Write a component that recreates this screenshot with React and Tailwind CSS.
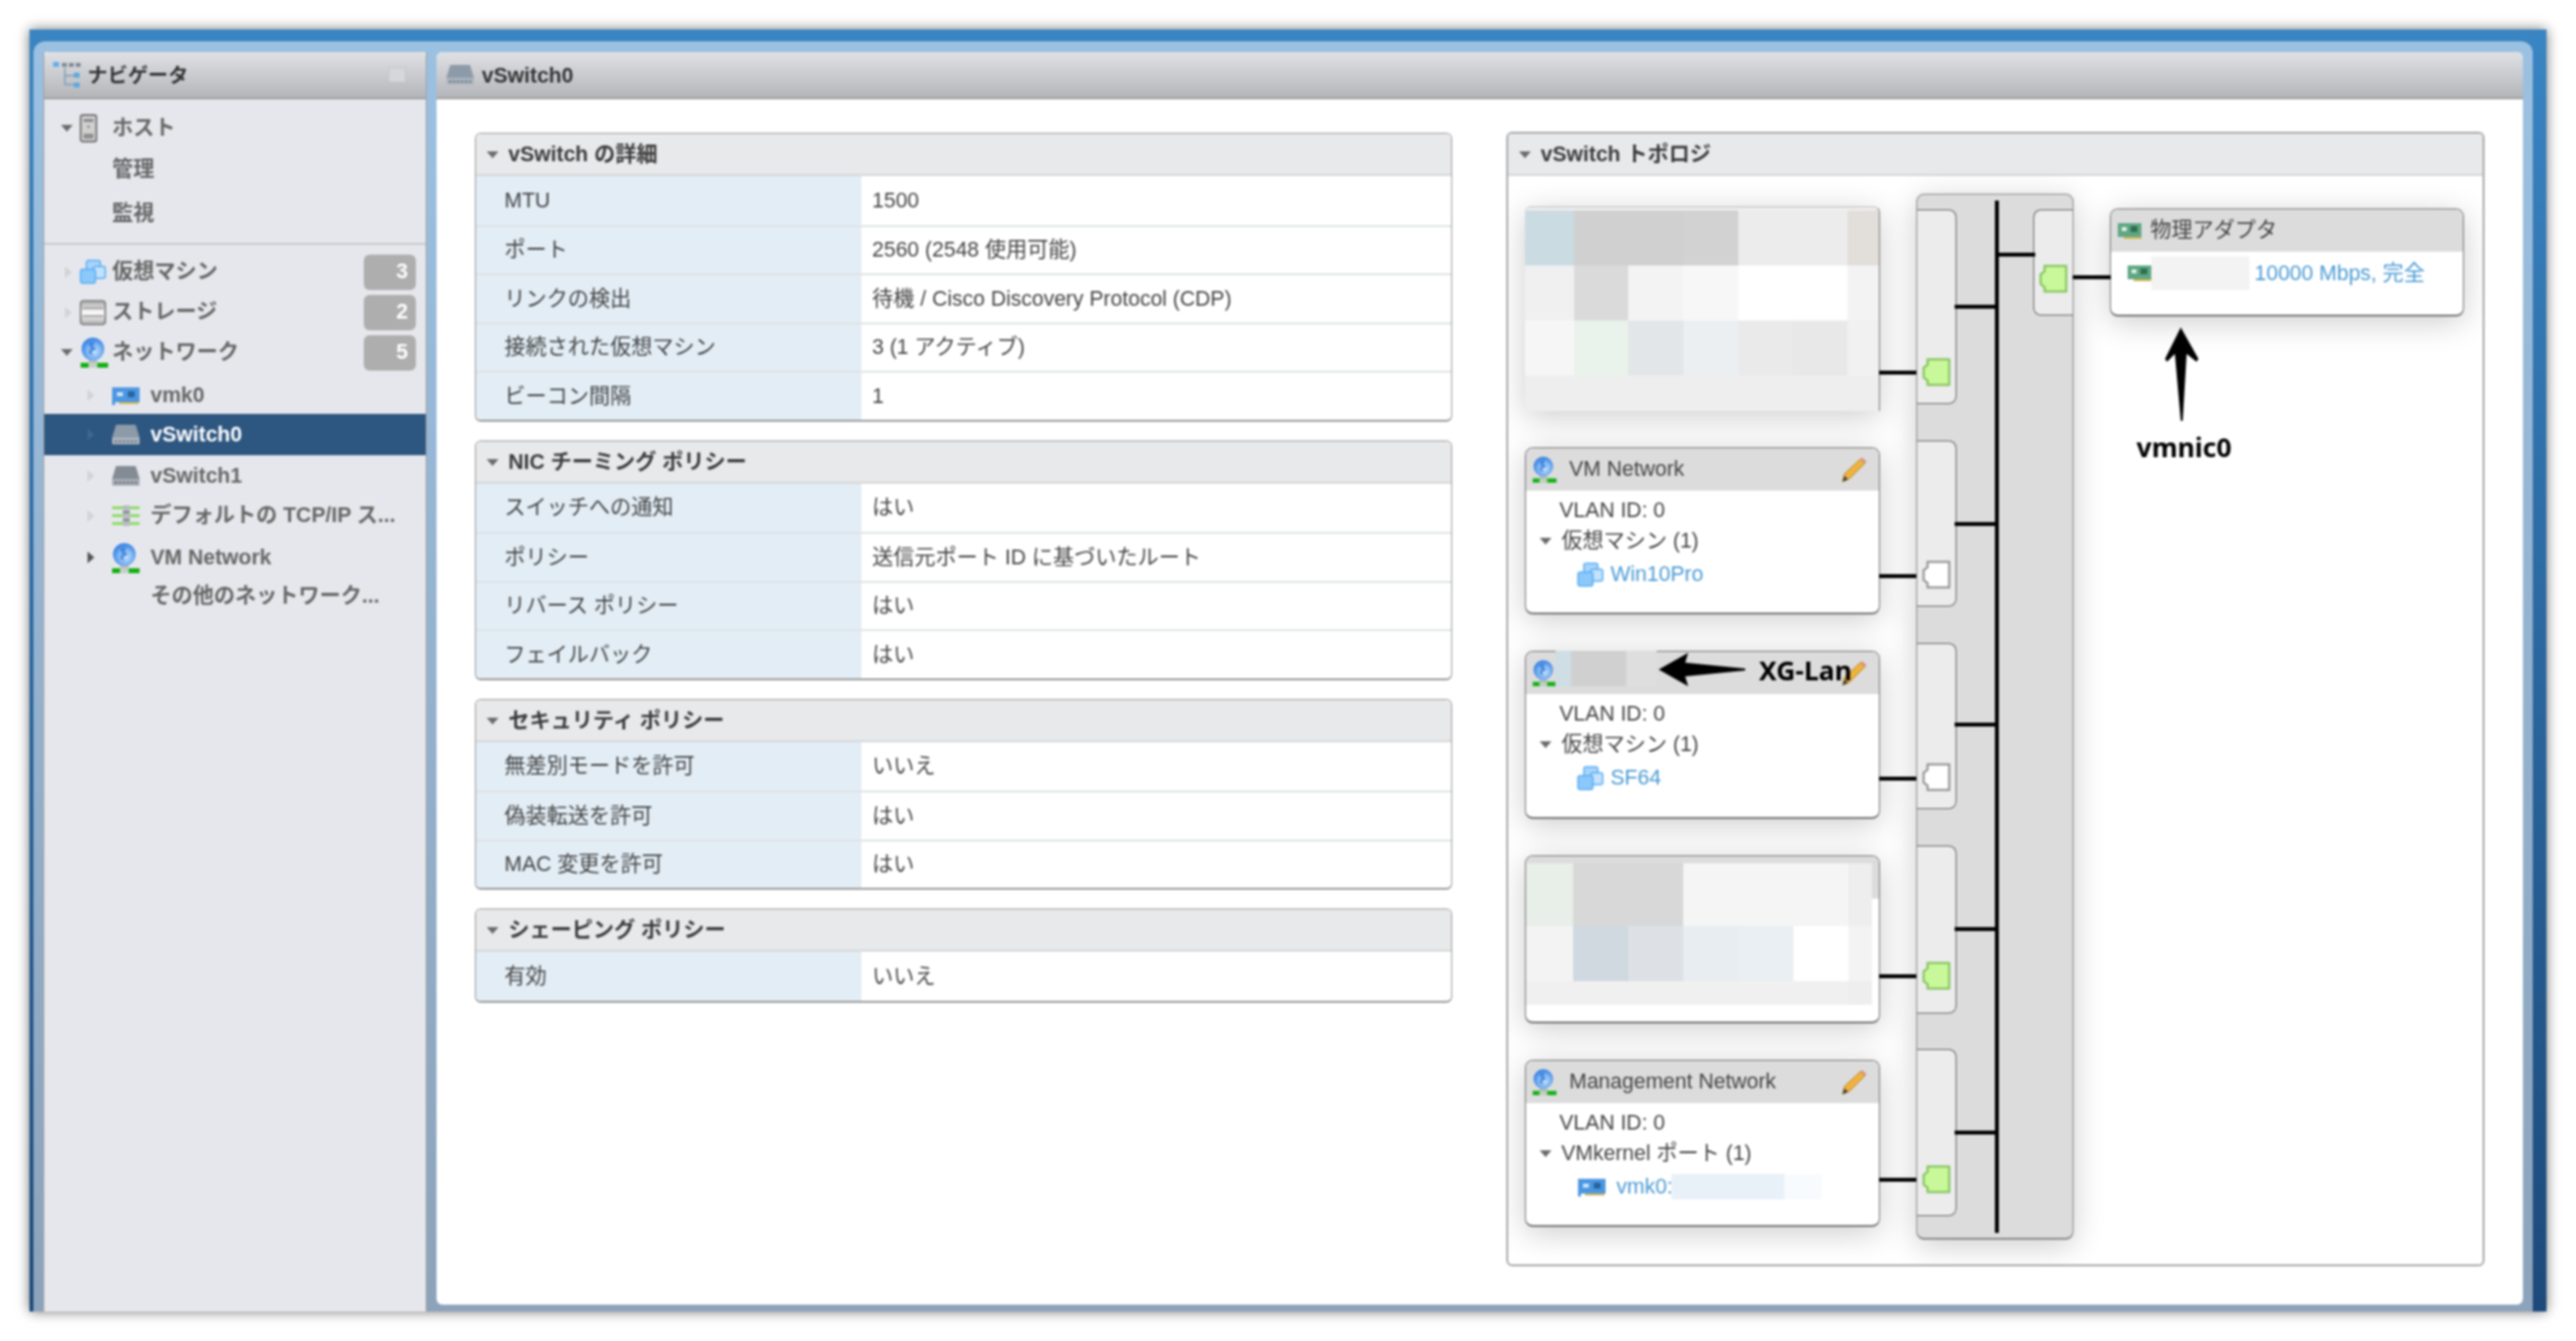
const sans = "[font-family:'Liberation_Sans','Noto_Sans_CJK_JP',sans-serif]";

const TriDown = ({ className = "" }) => (
  <svg width="14" height="9" viewBox="0 0 14 9" className={className}>
    <path d="M1 1H13L7 8Z" fill="#6b6b6b" />
  </svg>
);

const TriRight = ({ dark }) => (
  <svg width="9" height="14" viewBox="0 0 9 14">
    <path d="M1 1V13L8 7Z" fill={dark ? "#555" : "#d2d3d6"} />
  </svg>
);

const NavIcon = () => (
  <svg width="30" height="28" viewBox="0 0 30 28">
    <rect x="0" y="1" width="6" height="5" fill="#5fb0ee" />
    <rect x="9" y="2" width="5" height="4" fill="#7f8b96" />
    <rect x="16" y="2" width="5" height="4" fill="#7f8b96" />
    <rect x="23" y="2" width="5" height="4" fill="#7f8b96" />
    <path d="M12 7V24H21M12 15H21" stroke="#7f9fb8" strokeWidth="1.5" fill="none" />
    <rect x="21" y="12" width="6" height="5" fill="#5fa8e0" />
    <rect x="21" y="22" width="6" height="5" fill="#5fa8e0" />
  </svg>
);

const ServerIcon = () => (
  <svg width="18" height="29" viewBox="0 0 18 29">
    <rect x="1" y="1" width="16" height="27" rx="2" fill="#cfcfcf" stroke="#555" strokeWidth="1.4" />
    <rect x="4" y="5" width="10" height="3" fill="#8a8a8a" />
    <rect x="4" y="20" width="10" height="5" fill="#8f8f8f" />
    <rect x="8" y="12" width="2" height="2" fill="#777" />
  </svg>
);

const VmIcon = ({ w = 27, h = 25 }) => (
  <svg width={w} height={h} viewBox="0 0 27 25">
    <rect x="7" y="1" width="14" height="13" rx="2" fill="#a9d4fa" stroke="#5aaef5" strokeWidth="1.5" />
    <rect x="14" y="7" width="12" height="12" rx="2" fill="#c4e2fc" stroke="#5aaef5" strokeWidth="1.5" />
    <rect x="1" y="10" width="15" height="14" rx="2" fill="#8cc8fa" stroke="#5aaef5" strokeWidth="1.5" />
  </svg>
);

const StorageIcon = () => (
  <svg width="27" height="26" viewBox="0 0 27 26">
    <defs>
      <linearGradient id="disk" x1="0" y1="0" x2="0" y2="1">
        <stop offset="0" stopColor="#a9a9a9" />
        <stop offset="0.5" stopColor="#fafafa" />
        <stop offset="1" stopColor="#b0b0b0" />
      </linearGradient>
    </defs>
    <rect x="1" y="1" width="25" height="24" rx="3" fill="url(#disk)" stroke="#7a7a7a" strokeWidth="1.6" />
    <path d="M3 8.5H24M3 16.5H24" stroke="#7a7a7a" strokeWidth="1.2" />
  </svg>
);

const GlobeIcon = ({ w = 30, h = 31 }) => (
  <svg width={w} height={h} viewBox="0 0 30 31">
    <defs>
      <radialGradient id="globe" cx="0.55" cy="0.6" r="0.6">
        <stop offset="0" stopColor="#cfe6fd" />
        <stop offset="0.55" stopColor="#79b2f2" />
        <stop offset="1" stopColor="#2f7ae0" />
      </radialGradient>
    </defs>
    <rect x="9" y="22" width="9" height="5" fill="#b9bec4" />
    <circle cx="13.5" cy="12" r="11.5" fill="url(#globe)" />
    <path d="M9 6L15 4L14 9L17 12L12 15L14 19L9 16L11 11Z" fill="#2f78d8" opacity="0.75" />
    <rect x="1" y="26" width="28" height="5" fill="#14b014" />
    <rect x="9" y="26" width="9" height="5" fill="#c3d0c3" />
  </svg>
);

const NicIcon = ({ w = 29, h = 21 }) => (
  <svg width={w} height={h} viewBox="0 0 29 21">
    <rect x="1" y="2" width="28" height="15" fill="#4b97e2" />
    <rect x="6" y="7" width="6" height="4" fill="#cfe4f8" />
    <rect x="17" y="6" width="7" height="6" fill="#2a649c" />
    <rect x="1" y="2" width="3" height="18" fill="#4b97e2" />
    <rect x="8" y="17" width="20" height="2" fill="#d5b85a" />
  </svg>
);

const SwitchIcon = ({ light }) => (
  <svg width="30" height="22" viewBox="0 0 30 22">
    <path d="M5 1H25L29 14H1Z" fill={light ? "#8d9aa8" : "#838b94"} />
    <rect x="1" y="14" width="28" height="7" rx="1" fill={light ? "#a9b4bf" : "#a5abb2"} />
    <path d="M4 18H26" stroke="#4d5560" strokeWidth="1.6" strokeDasharray="2 2" />
  </svg>
);

const StackIcon = () => (
  <svg width="30" height="21" viewBox="0 0 30 21">
    <rect x="1" y="1" width="28" height="3" fill="#8fdc6a" />
    <rect x="1" y="9" width="28" height="3" fill="#8fdc6a" />
    <rect x="1" y="17" width="28" height="3" fill="#8fdc6a" />
    <rect x="12" y="0" width="7" height="21" fill="#b7bcc0" />
    <rect x="12" y="6" width="7" height="2" fill="#7f868c" />
    <rect x="12" y="14" width="7" height="2" fill="#7f868c" />
  </svg>
);

const PhysNicIcon = ({ w = 24, h = 16 }) => (
  <svg width={w} height={h} viewBox="0 0 24 16">
    <rect x="0" y="0" width="24" height="14" fill="#5fa784" />
    <rect x="4" y="4" width="5" height="4" fill="#e1efe6" />
    <rect x="13" y="3" width="7" height="6" fill="#2f6f50" />
    <rect x="6" y="14" width="18" height="2" fill="#d2b84e" />
  </svg>
);

const Pencil = () => (
  <svg width="26" height="26" viewBox="0 0 26 26">
    <path d="M1 25L3 17L19 2L24 6L8 22Z" fill="#efb23f" stroke="#b98a2c" strokeWidth="1" />
    <path d="M19 2L21 0.5L25.5 4.5L24 6Z" fill="#d88f8f" />
    <path d="M1 25L3 19L6.5 22.5Z" fill="#3c3c3c" />
  </svg>
);

const Port = ({ on }) => (
  <svg width="29" height="29" viewBox="0 0 29 29">
    <path
      d="M5.5 1.5H27.5V27.5H5.5V23L1.5 20V10L5.5 7Z"
      fill={on ? "#c8f89a" : "#ffffff"}
      stroke={on ? "#7fbf58" : "#8c8c8c"}
      strokeWidth="2"
    />
  </svg>
);

const navTop = [
  { h: "h-[42px]", label: "ホスト", open: true, icon: <ServerIcon /> },
  { h: "h-[42px]", label: "管理" },
  { h: "h-[48px]", label: "監視" },
];

const navBottom = [
  { h: "h-[41px]", label: "仮想マシン", icon: <VmIcon />, badge: 3 },
  { h: "h-[41px]", label: "ストレージ", icon: <StorageIcon />, badge: 2 },
  { h: "h-[41px]", label: "ネットワーク", open: true, icon: <GlobeIcon />, badge: 5 },
  { h: "h-[42px] pt-[4px]", label: "vmk0", sub: true, icon: <NicIcon /> },
  { h: "h-[42px]", label: "vSwitch0", sub: true, active: true, icon: <SwitchIcon light /> },
  { h: "h-[42px]", label: "vSwitch1", sub: true, icon: <SwitchIcon /> },
  { h: "h-[39px]", label: "デフォルトの TCP/IP ス...", sub: true, icon: <StackIcon /> },
  { h: "h-[46px]", label: "VM Network", sub: true, dark: true, icon: <GlobeIcon /> },
  { h: "h-[32px]", label: "その他のネットワーク...", sub: true, noArrow: true },
];

function NavRow({ row }) {
  return (
    <div
      className={`flex items-center ${row.h} ${row.sub ? "pl-[43px]" : "pl-[16px]"} ${
        row.active ? "bg-[#2d5680] text-white" : "text-[#666666]"
      }`}
    >
      <span className={`flex items-center ${row.sub ? "w-[25px]" : "w-[20px]"}`}>
        {row.noArrow || (!row.icon && !row.sub) ? null : row.open ? (
          <TriDown />
        ) : row.active ? (
          <svg width="9" height="14" viewBox="0 0 9 14">
            <path d="M1 1V13L8 7Z" fill="#3d6690" />
          </svg>
        ) : (
          <span className={row.sub ? "" : "pl-[4px]"}>
            <TriRight dark={row.dark} />
          </span>
        )}
      </span>
      <span className={`flex items-center ${row.sub ? "w-[40px]" : "w-[33px]"}`}>{row.icon}</span>
      <span className="font-bold whitespace-nowrap">{row.label}</span>
      {row.badge && (
        <span className="ml-auto mr-[10px] flex h-[36px] w-[53px] items-center justify-end rounded-md bg-[#aeaeae] pr-[8px] font-bold text-white">
          {row.badge}
        </span>
      )}
    </div>
  );
}

const sections = [
  {
    title: "vSwitch の詳細",
    rows: [
      ["MTU", "1500"],
      ["ポート", "2560 (2548 使用可能)"],
      ["リンクの検出", "待機 / Cisco Discovery Protocol (CDP)"],
      ["接続された仮想マシン", "3 (1 アクティブ)"],
      ["ビーコン間隔", "1"],
    ],
  },
  {
    title: "NIC チーミング ポリシー",
    rows: [
      ["スイッチへの通知", "はい"],
      ["ポリシー", "送信元ポート ID に基づいたルート"],
      ["リバース ポリシー", "はい"],
      ["フェイルバック", "はい"],
    ],
  },
  {
    title: "セキュリティ ポリシー",
    rows: [
      ["無差別モードを許可", "いいえ"],
      ["偽装転送を許可", "はい"],
      ["MAC 変更を許可", "はい"],
    ],
  },
  {
    title: "シェーピング ポリシー",
    rows: [["有効", "いいえ"]],
  },
];

function PanelHeader({ title }) {
  return (
    <div className="flex h-[43px] shrink-0 items-center border-b-2 border-[#d6d7d9] bg-[#e8e9eb] pl-[10px] pt-[2px] font-bold text-[#3a3a3a]">
      <TriDown className="mr-[9px]" />
      {title}
    </div>
  );
}

function DetailPanel({ section }) {
  return (
    <div className="overflow-hidden rounded-md border border-b-2 border-[#9a9a9a]">
      <PanelHeader title={section.title} />
      {section.rows.map(([label, value], i) => (
        <div key={label} className={`flex h-[49.5px] ${i > 0 ? "border-t-2 border-[#dfe3e6]" : ""}`}>
          <div className="flex w-[392px] items-center bg-[#e2edf5] pl-[29px] text-[#444]">{label}</div>
          <div className="flex flex-1 items-center pl-[11px] text-[#444]">{value}</div>
        </div>
      ))}
    </div>
  );
}

const cardShadow = "shadow-[0_6px_32px_rgba(0,0,0,0.2)]";

function NetCard({ title, h, sub, link, icon, linkPad, hideTitle }) {
  return (
    <div className={`${h} w-[361px] overflow-hidden rounded-lg border border-b-2 border-[#777] bg-white ${cardShadow} text-[#444]`}>
      <div className="flex h-[43px] items-center bg-[#dcdcdc] pl-[6px] pr-[12px]">
        <GlobeIcon w={26} h={27} />
        <span className="ml-[12px]">{hideTitle ? "" : title}</span>
        <span className="ml-auto">
          <Pencil />
        </span>
      </div>
      <div className="pl-[34px] pt-[4px] leading-[32px]">VLAN ID: 0</div>
      <div className="flex items-center pl-[13px] leading-[30px]">
        <TriDown className="mr-[9px]" />
        {sub}
      </div>
      <div className="flex h-[38px] items-center pl-[52px] text-[#4a9ad4]">
        <span className={`flex items-center ${linkPad}`}>{icon}</span>
        {link}
      </div>
    </div>
  );
}

const Mosaic = ({ cols, rows }) => (
  <div className="flex flex-col">
    {rows.map((row, r) => (
      <div key={r} className={`flex ${row.h}`}>
        {row.c.map((c, i) => (
          <div key={i} className={cols[i]} style={{ background: c }} />
        ))}
      </div>
    ))}
  </div>
);

const topCols = ["w-[50px]", "w-[56px]", "w-[56px]", "w-[56px]", "w-[56px]", "w-[56px]", "w-[32px]"];
const lowCols = ["w-[48px]", "w-[56px]", "w-[56px]", "w-[56px]", "w-[56px]", "w-[56px]", "w-[24px]"];

const topRows = [
  { h: "h-[56px]", c: ["#cbdbe2", "#d0d0d0", "#d0d0d0", "#d2d2d2", "#ececec", "#ececec", "#e2dfdb"] },
  { h: "h-[56px]", c: ["#f0f0f0", "#dadada", "#f3f3f3", "#f7f7f7", "#ffffff", "#ffffff", "#f3f3f3"] },
  { h: "h-[56px]", c: ["#f6f6f6", "#eaf2ec", "#e3e6e8", "#ebeff1", "#eaeaea", "#e8e8e8", "#f1f1f1"] },
  { h: "h-[43px]", c: ["#eeeeee", "#eeeeee", "#eeeeee", "#eeeeee", "#eeeeee", "#eeeeee", "#eeeeee"] },
];

const lowRows = [
  { h: "h-[64px]", c: ["#e8eee8", "#d8d8d8", "#d8d8d8", "#f5f5f5", "#f5f5f5", "#f5f5f5", "#eeeeee"] },
  { h: "h-[56px]", c: ["#f3f3f3", "#d0d8e0", "#dde1e6", "#e8edf1", "#e9eff2", "#ffffff", "#f3f3f3"] },
  { h: "h-[24px]", c: ["#f0f0f0", "#f0f0f0", "#f0f0f0", "#f0f0f0", "#f0f0f0", "#f0f0f0", "#eeeeee"] },
];

const tabs = [
  { box: "h-[198px] mt-[15px]", on: true, portMt: "mt-[150px]" },
  { box: "h-[169px] mt-[37px]", on: false, portMt: "mt-[121px]" },
  { box: "h-[169px] mt-[37px]", on: false, portMt: "mt-[121px]" },
  { box: "h-[171px] mt-[37px]", on: true, portMt: "mt-[117px]" },
  { box: "h-[170px] mt-[36px]", on: true, portMt: "mt-[117px]" },
];

const wires = [
  "top-[198px] left-[377px] w-[38px]",
  "top-[405px] left-[377px] w-[38px]",
  "top-[611px] left-[377px] w-[38px]",
  "top-[812px] left-[377px] w-[38px]",
  "top-[1019px] left-[377px] w-[38px]",
  "top-[131px] left-[454px] w-[41px]",
  "top-[352px] left-[454px] w-[41px]",
  "top-[556px] left-[454px] w-[41px]",
  "top-[764px] left-[454px] w-[41px]",
  "top-[971px] left-[454px] w-[41px]",
  "top-[78px] left-[495px] w-[41px]",
  "top-[101px] left-[574px] w-[39px]",
];

function Topology() {
  return (
    <div className="flex h-[1154px] w-[995px] flex-col overflow-hidden rounded-md border-2 border-[#a9a9a9]">
      <PanelHeader title="vSwitch トポロジ" />
      <div className="relative flex flex-1 pl-[17px] pt-[31px]">
        <div className="flex w-[361px] flex-col gap-[37px]">
          <div className={`h-[208px] w-[361px] overflow-hidden rounded-t-md border-t border-r border-[#bdbdbd] border-r-[#777] bg-[#efefef] pt-[3px] ${cardShadow}`}>
            <Mosaic cols={topCols} rows={topRows} />
          </div>
          <NetCard title="VM Network" h="h-[170px]" sub="仮想マシン (1)" link="Win10Pro" linkPad="w-[34px]" icon={<VmIcon />} />
          <NetCard hideTitle h="h-[171px]" sub="仮想マシン (1)" link="SF64" linkPad="w-[34px]" icon={<VmIcon />} />
          <div className={`relative h-[171px] w-[361px] overflow-hidden rounded-lg border border-b-2 border-[#777] bg-white ${cardShadow}`}>
            <div className="h-[43px] bg-[#dcdcdc]" />
            <div className="absolute left-0 top-[7px]">
              <Mosaic cols={lowCols} rows={lowRows} />
            </div>
          </div>
          <NetCard title="Management Network" h="h-[170px]" sub="VMkernel ポート (1)" link="vmk0:" linkPad="w-[40px]" icon={<NicIcon />} />
        </div>

        <div className={`relative ml-[37px] mt-[-13px] flex h-[1064px] w-[160px] justify-between rounded-lg border border-b-2 border-[#8a8a8a] bg-[#dcdcdc] ${cardShadow}`}>
          <div className="flex w-[40px] flex-col">
            {tabs.map((t, i) => (
              <div key={i} className={`${t.box} shrink-0 rounded-r-lg border border-l-0 border-[#666] bg-[#ececec] pl-[5px]`}>
                <div className={t.portMt}>
                  <Port on={t.on} />
                </div>
              </div>
            ))}
          </div>
          <div className="absolute bottom-[5px] left-[79px] top-[6px] w-[4px] bg-black" />
          <div className="mt-[15px] h-[108px] w-[40px] rounded-l-lg border border-r-0 border-[#666] bg-[#ececec] pl-[5px] pt-[55px]">
            <Port on />
          </div>
        </div>

        <div className={`ml-[37px] mt-[2px] h-[110px] w-[360px] overflow-hidden rounded-lg border border-b-2 border-[#777] bg-white ${cardShadow} text-[#444]`}>
          <div className="flex h-[43px] items-center bg-[#dcdcdc] pl-[7px]">
            <PhysNicIcon />
            <span className="ml-[9px]">物理アダプタ</span>
          </div>
          <div className="flex items-center pl-[17px] pt-[5px] text-[#4a9ad4]">
            <PhysNicIcon />
            <span className="h-[34px] w-[100px] bg-[#f2f3f2]" />
            <span className="ml-[5px]">10000 Mbps, 完全</span>
          </div>
        </div>

        {wires.map((w) => (
          <div key={w} className={`absolute h-[4px] bg-black ${w}`} />
        ))}

        {/* annotations drawn on top of the screenshot */}
        <div className="absolute left-[48px] top-[483px] h-[36px] w-[103px] bg-[#dedede]">
          <div className="h-full w-[16px] bg-[#cfdde4]" />
          <div className="absolute left-[16px] top-0 h-full w-[56px] bg-[#d0d0d0]" />
        </div>
        <svg className="absolute left-[153px] top-[484px]" width="90" height="36" viewBox="0 0 90 36">
          <path d="M0 18L30 1L27 11L88 17V19L27 25L30 35Z" fill="#000" />
        </svg>
        <span className="absolute left-[255px] top-[488px] text-[27px] font-bold leading-[30px] text-black [font-family:'Noto_Sans',sans-serif]">
          XG-Lan
        </span>
        <div className="absolute left-[166px] top-[1015px] h-[26px] w-[115px] bg-[#e9f1f8]" />
        <div className="absolute left-[281px] top-[1015px] h-[26px] w-[38px] bg-[#f8fbfd]" />
        <svg className="absolute left-[667px] top-[154px]" width="36" height="96" viewBox="0 0 36 96">
          <path d="M17 0L35 32L33 35L23 27L19 95H17L11 27L3 35L1 32Z" fill="#000" />
        </svg>
        <span className="absolute left-[639px] top-[261px] text-[27px] font-bold leading-[30px] text-black [font-family:'Noto_Sans',sans-serif]">
          vmnic0
        </span>
      </div>
    </div>
  );
}

export default function App() {
  return (
    <div className={`h-[1364px] w-[2620px] overflow-hidden bg-white p-[30px] text-[21.5px] ${sans}`}>
      <div className="h-full blur-[0.8px]">
        <div className="h-full bg-linear-to-b from-[#3a85c3] to-[#1d4a7a] pl-[4px] pr-[14px] pt-[12px] shadow-[0_0_12px_rgba(0,0,0,0.55)]">
          <div className="flex h-full gap-[10px] rounded-t-xl bg-linear-to-b from-[#9bc1e2] to-[#8da3bb] px-[10px] pt-[11px]">
            <div className="flex w-[390px] flex-col border-x border-[#a0a0a0] bg-[#e6e7ec]">
              <div className="flex h-[48px] shrink-0 items-center rounded-t-md border-b-2 border-[#a0a0a0] bg-linear-to-b from-[#e0e1e5] to-[#b5b6ba] pl-[9px] font-bold text-[#333]">
                <NavIcon />
                <span className="ml-[5px] pt-[2px] text-[20.5px]">ナビゲータ</span>
                <span className="ml-auto mr-[20px] h-[16px] w-[18px] border border-[#c4c5c8] bg-[#d6d7da]" />
              </div>
              <div className="border-b-2 border-[#c9cacd] pt-[8px]">
                {navTop.map((row) => (
                  <NavRow key={row.label} row={row} />
                ))}
                <div className="h-[6px]" />
              </div>
              <div className="pt-[7px]">
                {navBottom.map((row) => (
                  <NavRow key={row.label} row={row} />
                ))}
              </div>
            </div>

            <div className="mb-[7px] flex flex-1 flex-col overflow-hidden rounded-md bg-white">
              <div className="flex h-[48px] shrink-0 items-center border-b-2 border-[#a0a0a0] bg-linear-to-b from-[#e0e1e5] to-[#b5b6ba] pl-[9px] font-bold text-[#333]">
                <SwitchIcon light />
                <span className="ml-[7px] pt-[2px]">vSwitch0</span>
              </div>
              <div className="flex gap-[55px] px-[39px] pt-[33px]">
                <div className="mt-[1px] flex w-[994px] flex-col gap-[19px]">
                  {sections.map((s) => (
                    <DetailPanel key={s.title} section={s} />
                  ))}
                </div>
                <Topology />
              </div>
            </div>
          </div>
        </div>
      </div>
    </div>
  );
}
